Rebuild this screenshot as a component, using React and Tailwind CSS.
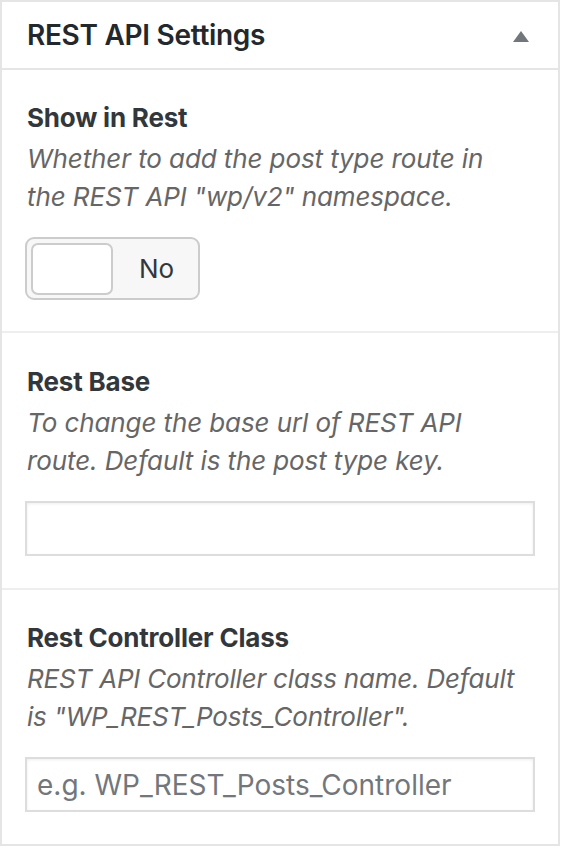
export default function App() {
  const font = { fontFamily: 'Inter, "Noto Sans", sans-serif' };
  return (
    <div className="w-[562px] h-[848px] bg-white" style={font}>
      <div className="w-[560px] border-2 border-[#e5e5e5] bg-white">
        <div className="h-[68px] border-b-2 border-[#e5e5e5] flex items-center justify-between pl-[25px] pr-[29px]">
          <h2 className="text-[28px] font-semibold text-[#23282d] tracking-[-0.3px]">REST API Settings</h2>
          <svg width="16" height="11" viewBox="0 0 16 11" className="mt-[2px]">
            <path d="M8 0 L16 11 L0 11 Z" fill="#72777c" />
          </svg>
        </div>

        <section className="px-[23px] pt-[29px] pb-[31px] border-b-2 border-[#eeeeee]">
          <h3 className="text-[26px] leading-[38px] font-bold text-[#32373c] pl-[2px] tracking-[-0.2px]">Show in Rest</h3>
          <p className="mt-[3px] text-[26px] leading-[38px] italic text-[#666] pl-[2px] pr-[20px] tracking-[-0.1px]">
            Whether to add the post type route in the REST API "wp/v2" namespace.
          </p>
          <div className="mt-[21px] w-[175px] h-[63px] rounded-[9px] border-2 border-[#cccccc] bg-[#f7f7f7] flex items-center p-[4px]">
            <div className="w-[82px] h-[52px] rounded-[7px] border-2 border-[#cccccc] bg-white" />
            <span className="ml-[26px] text-[26px] text-[#32373c]">No</span>
          </div>
        </section>

        <section className="px-[23px] pt-[30px] pb-[32px] border-b-2 border-[#eeeeee]">
          <h3 className="text-[26px] leading-[38px] font-bold text-[#32373c] pl-[2px] tracking-[-0.2px]">Rest Base</h3>
          <p className="mt-[3px] text-[26px] leading-[38px] italic text-[#666] pl-[2px] tracking-[-0.1px]">
            To change the base url of REST API route. Default is the post type key.
          </p>
          <input
            type="text"
            className="mt-[21px] block w-[510px] h-[55px] border-2 border-[#dddddd] bg-white shadow-[inset_0_1px_3px_rgba(0,0,0,0.07)] outline-none"
          />
        </section>

        <section className="px-[23px] pt-[29px] pb-[32px]">
          <h3 className="text-[26px] leading-[38px] font-bold text-[#32373c] pl-[2px] tracking-[-0.2px]">Rest Controller Class</h3>
          <p className="mt-[3px] text-[26px] leading-[38px] italic text-[#666] pl-[2px] tracking-[-0.2px]">
            REST API Controller class name. Default is "WP_REST_Posts_Controller".
          </p>
          <input
            type="text"
            placeholder="e.g. WP_REST_Posts_Controller"
            className="mt-[21px] block w-[510px] h-[55px] border-2 border-[#dddddd] bg-white px-[10px] text-[28px] text-[#32373c] placeholder:text-[#72777c] shadow-[inset_0_1px_3px_rgba(0,0,0,0.07)] outline-none"
            style={font}
          />
        </section>
      </div>
    </div>
  );
}
